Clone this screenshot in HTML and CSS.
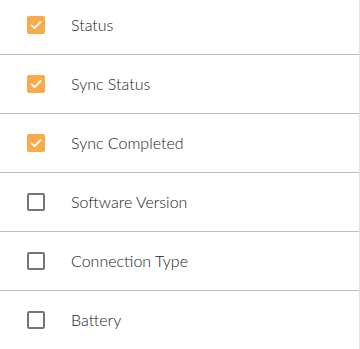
FILE: index.html
```html
<!DOCTYPE html>
<html>
<head>
<meta charset="utf-8">
<link rel="stylesheet" href="styles.css">
</head>
<body>
<div class="panel">
  <ul class="list">
    <li class="row"><span class="cb checked"><svg viewBox="0 0 18 18" width="18" height="18"><path d="M4.5 9.3 L7.6 12.2 L13.6 6" fill="none" stroke="#fff" stroke-width="1.8" stroke-linecap="round" stroke-linejoin="round"/></svg></span><span class="label">Status</span></li>
    <li class="row"><span class="cb checked"><svg viewBox="0 0 18 18" width="18" height="18"><path d="M4.5 9.3 L7.6 12.2 L13.6 6" fill="none" stroke="#fff" stroke-width="1.8" stroke-linecap="round" stroke-linejoin="round"/></svg></span><span class="label">Sync Status</span></li>
    <li class="row"><span class="cb checked"><svg viewBox="0 0 18 18" width="18" height="18"><path d="M4.5 9.3 L7.6 12.2 L13.6 6" fill="none" stroke="#fff" stroke-width="1.8" stroke-linecap="round" stroke-linejoin="round"/></svg></span><span class="label">Sync Completed</span></li>
    <li class="row"><span class="cb"></span><span class="label">Software Version</span></li>
    <li class="row"><span class="cb"></span><span class="label">Connection Type</span></li>
    <li class="row"><span class="cb"></span><span class="label">Battery</span></li>
  </ul>
</div>
</body>
</html>
```
FILE: styles.css
```css
html, body {
  margin: 0;
  padding: 0;
  background: #fff;
}
body {
  font-family: Lato, "Open Sans", sans-serif;
  overflow: hidden;
}
.panel {
  width: 359px;
  height: 349px;
  border-right: 1px solid #e2e2e2;
  overflow: hidden;
}
.list {
  list-style: none;
  margin: -4px 0 0 0;
  padding: 0;
}
.row {
  display: flex;
  align-items: center;
  height: 58px;
  padding-left: 27px;
  border-bottom: 1px solid #bdbdbd;
}
.row:last-child {
  border-bottom: none;
}
.cb {
  box-sizing: border-box;
  width: 18px;
  height: 18px;
  border: 2px solid #757575;
  border-radius: 2px;
  margin-right: 26px;
  flex: none;
  display: flex;
}
.cb.checked {
  border: none;
  background: #f9ab4b;
}
.label {
  font-size: 16px;
  font-weight: 300;
  color: #222;
  line-height: 18px;
}
```
